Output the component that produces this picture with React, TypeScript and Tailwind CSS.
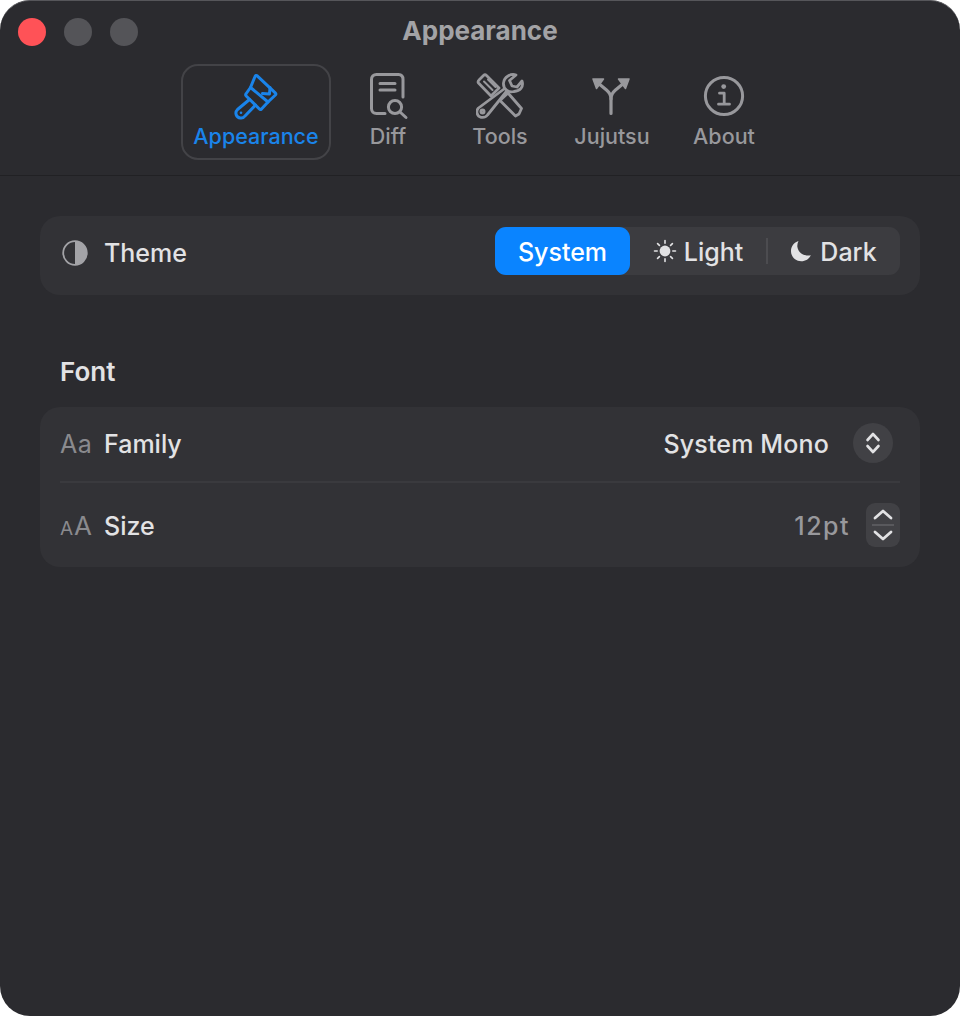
import type { ReactNode } from 'react'

function BrushIcon() {
  return (
    <svg width="48" height="48" viewBox="0 0 48 48" fill="none" stroke="currentColor" strokeWidth="3" strokeLinejoin="round" strokeLinecap="round">
      <path d="M18.5 15.5 L23 4.5 C23.4 3.4 24.4 3.2 25.2 3.8 L43.5 21.2 C44 21.8 44 22.4 43.4 23 L36 30" />
      <path d="M38 15.5 L37.5 22 L30.5 21.5" />
      <path d="M14.2 21.5 L18.5 15.5 L36 30 L29.5 37 C28.8 37.6 28 37.6 27.4 37 L14.2 24 C13.6 23.4 13.6 22.3 14.2 21.5 Z" />
      <path d="M17.5 27.5 L5.5 37.5 C2.5 40.5 4 45.6 8.5 46 C10.6 46.2 12 45.5 13 44 L23.5 33" />
      <circle cx="9" cy="40.8" r="1.3" fill="currentColor" stroke="none" />
    </svg>
  )
}

function DiffIcon() {
  return (
    <svg width="48" height="48" viewBox="0 0 48 48" fill="none" stroke="currentColor" strokeWidth="3" strokeLinecap="round" strokeLinejoin="round">
      <path d="M21 41.5 H12.5 C9.5 41.5 7.5 39.5 7.5 36.5 V7.5 C7.5 4.5 9.5 2.5 12.5 2.5 H34.5 C37.3 2.5 39 4.5 39 7.5 V25" />
      <path d="M16 11.5 H31 M16 18 H31" />
      <circle cx="31" cy="35" r="6.6" />
      <path d="M36 40 L42 45.5" />
    </svg>
  )
}

function ToolsIcon() {
  return (
    <svg width="48" height="48" viewBox="0 0 48 48" fill="none" stroke="currentColor" strokeWidth="2.8" strokeLinecap="round" strokeLinejoin="round">
      <path d="M3.5 7.5 L7.5 3.5 C8.5 2.6 9.5 2.6 10.5 3.5 L23 16 L15 24 L2.5 11 C1.6 10 2.6 8.4 3.5 7.5 Z" />
      <path d="M8 9.5 L16.5 18 M12 7.5 L19.5 15" strokeWidth="2" />
      <path d="M24 28.5 L32 21 L45.5 36.5 L43 42 L39.5 44 Z" />
      <path d="M38 19.5 C32.5 21 27 17 27.5 11 C28 5 35 1 40 3 L33.5 8.5 L36 14 L41 15 L46 9 C48 15 44 19 38 19.5 Z" />
      <path d="M28 17 L2.5 36 C-0.5 39 1 44.5 5 45.3 C8 45.8 10 45 11.5 43 L30 20" />
      <circle cx="6.5" cy="39.5" r="1.6" />
    </svg>
  )
}

function SplitIcon() {
  return (
    <svg width="48" height="48" viewBox="0 0 48 48" fill="none" stroke="currentColor" strokeWidth="3.2" strokeLinecap="round" strokeLinejoin="round">
      <path d="M23 41.5 V27 C23 23 21.5 20.5 18.5 18 L10 11" />
      <path d="M23 27 C23 23 24.5 20.5 27.5 18 L36 11" />
      <path d="M5 7 H15.5 L8.5 16.5 Z" fill="currentColor" strokeWidth="1.5" />
      <path d="M41 7 H30.5 L37.5 16.5 Z" fill="currentColor" strokeWidth="1.5" />
    </svg>
  )
}

function InfoIcon() {
  return (
    <svg width="48" height="48" viewBox="0 0 48 48" fill="none" stroke="currentColor" strokeWidth="3" strokeLinecap="round" strokeLinejoin="round">
      <circle cx="24" cy="24" r="18.6" />
      <circle cx="23.7" cy="14.6" r="2.4" fill="currentColor" stroke="none" />
      <path d="M19.5 21.2 H24.2 V32 M18.5 32.2 H29.5" strokeWidth="2.8" />
    </svg>
  )
}

function HalfCircle() {
  return (
    <svg width="28" height="28" viewBox="0 0 28 28">
      <circle cx="14" cy="14" r="11.8" fill="none" stroke="#a3a3a7" strokeWidth="1.8" />
      <path d="M14 2.2 A11.8 11.8 0 0 1 14 25.8 Z" fill="#a3a3a7" />
    </svg>
  )
}

function SunIcon() {
  return (
    <svg width="24" height="24" viewBox="0 0 24 24" fill="none" stroke="#e2e2e4" strokeWidth="1.6" strokeLinecap="round">
      <circle cx="12" cy="12" r="5.4" fill="#e2e2e4" stroke="none" />
      <path d="M12 1.5 V4.2 M12 19.8 V22.5 M1.5 12 H4.2 M19.8 12 H22.5 M4.6 4.6 L6.4 6.4 M17.6 17.6 L19.4 19.4 M4.6 19.4 L6.4 17.6 M17.6 6.4 L19.4 4.6" />
    </svg>
  )
}

function MoonIcon() {
  return (
    <svg width="22" height="22" viewBox="0 0 22 22">
      <path d="M8.5 1 C4 2.5 1 6.3 1 11 C1 16.8 5.6 21.2 11.2 21.2 C15.6 21.2 19.2 19 20.8 15.2 C14.5 16.6 8.2 13 7.4 7 C7.1 4.8 7.6 2.8 8.5 1 Z" fill="#e2e2e4" />
    </svg>
  )
}

const tabs: { label: string; icon: ReactNode; active?: boolean }[] = [
  { label: 'Appearance', icon: <BrushIcon />, active: true },
  { label: 'Diff', icon: <DiffIcon /> },
  { label: 'Tools', icon: <ToolsIcon /> },
  { label: 'Jujutsu', icon: <SplitIcon /> },
  { label: 'About', icon: <InfoIcon /> },
]

export default function App() {
  return (
    <div className="w-[960px] h-[1016px] bg-white font-[Inter,sans-serif] font-[450] overflow-hidden">
      <div className="h-full rounded-[30px] bg-[#2b2b2f] border-t border-[#56565a] flex flex-col">
        {/* titlebar + toolbar */}
        <header className="h-[175px] border-b border-[#212124] flex flex-col">
          <div className="h-[63px] flex items-center px-[18px] relative">
            <div className="flex gap-[18px] -mt-[1px]">
              <span className="w-[28px] h-[28px] rounded-full bg-[#ff5257]" />
              <span className="w-[28px] h-[28px] rounded-full bg-[#545458]" />
              <span className="w-[28px] h-[28px] rounded-full bg-[#545458]" />
            </div>
            <div className="absolute inset-x-0 top-0 h-[59px] flex items-center justify-center text-[26px] font-bold text-[#a3a3a6]">
              Appearance
            </div>
          </div>
          <nav className="flex justify-center pl-[1px]">
            {tabs.map(t => (
              <div
                key={t.label}
                className={
                  t.active
                    ? 'w-[150px] h-[96px] mr-[1px] rounded-[17px] border-2 border-[#434347] flex flex-col items-center text-[#1a84ea] pt-[6px]'
                    : 'w-[112px] h-[96px] flex flex-col items-center text-[#98989c] pt-[8px]'
                }
              >
                {t.icon}
                <span className="text-[21.5px] leading-[28px] mt-[2px]">{t.label}</span>
              </div>
            ))}
          </nav>
        </header>

        <main className="px-[40px] pt-[40px] text-[#e2e2e4]">
          {/* theme row */}
          <section className="h-[79px] rounded-[20px] bg-[#323236] pl-[21px] pr-[20px] pb-[5px] flex items-center">
            <HalfCircle />
            <span className="ml-[15px] mt-[2px] text-[25px]">Theme</span>
            <div className="ml-auto -mt-[4px] w-[405px] h-[48px] rounded-[11px] bg-[#3c3c40] flex items-center text-[25px]">
              <div className="w-[135px] h-full pt-[4px] rounded-[11px] bg-[#0a84ff] text-white flex items-center justify-center">System</div>
              <div className="w-[136px] flex items-center justify-center gap-[7px]">
                <SunIcon />
                <span className="mt-[4px]">Light</span>
              </div>
              <div className="w-[2px] h-[26px] bg-[#4c4c50]" />
              <div className="flex-1 flex items-center justify-center gap-[8px] pr-[1px]">
                <MoonIcon />
                <span className="mt-[4px]">Dark</span>
              </div>
            </div>
          </section>

          <h2 className="mt-[59px] ml-[20px] text-[26px] leading-[36px] font-semibold text-[#e2e2e4]">Font</h2>

          {/* font settings */}
          <section className="mt-[17px] h-[160px] rounded-[20px] bg-[#323236] px-[20px] flex flex-col">
            <div className="h-[74px] flex items-center">
              <span className="w-[31px] mt-[2px] text-[25px] text-[#8a8a8e] font-normal tracking-[0.5px]">Aa</span>
              <span className="ml-[13px] mt-[2px] text-[25px]">Family</span>
              <span className="ml-auto mt-[2px] text-[25px] tracking-[0.15px]">System Mono</span>
              <div className="ml-[24px] mr-[7px] -mt-[2px] w-[40px] h-[40px] rounded-full bg-[#414145] flex items-center justify-center">
                <svg width="20" height="30" viewBox="0 0 20 30" fill="none" stroke="#e2e2e4" strokeWidth="2.6" strokeLinecap="round" strokeLinejoin="round">
                  <path d="M4.5 12 L10 6 L15.5 12 M4.5 18 L10 24 L15.5 18" />
                </svg>
              </div>
            </div>
            <div className="h-[2px] bg-[#3a3a3e]" />
            <div className="flex-1 flex items-center">
              <span className="w-[31px] mt-[2px] text-[#8a8a8e] font-normal flex items-baseline">
                <span className="text-[19px] leading-none">A</span>
                <span className="text-[26px] leading-none ml-[1px]">A</span>
              </span>
              <span className="ml-[13px] mt-[4px] text-[25px]">Size</span>
              <span className="ml-auto mt-[4px] text-[25px] text-[#98989c] tracking-[1.5px]">12pt</span>
              <div className="ml-[16px] -mt-[1px] w-[34px] h-[44px] rounded-[9px] bg-[#414145] flex flex-col items-center">
                <svg className="mt-[6px]" width="20" height="11" viewBox="0 0 20 11" fill="none" stroke="#e2e2e4" strokeWidth="2.8" strokeLinecap="round" strokeLinejoin="round">
                  <path d="M2 9 L10 2 L18 9" />
                </svg>
                <div className="w-[22px] h-[2px] bg-[#59595d] mt-[4px]" />
                <svg className="mt-[4px]" width="20" height="11" viewBox="0 0 20 11" fill="none" stroke="#e2e2e4" strokeWidth="2.8" strokeLinecap="round" strokeLinejoin="round">
                  <path d="M2 2 L10 9 L18 2" />
                </svg>
              </div>
            </div>
          </section>
        </main>
      </div>
    </div>
  )
}
